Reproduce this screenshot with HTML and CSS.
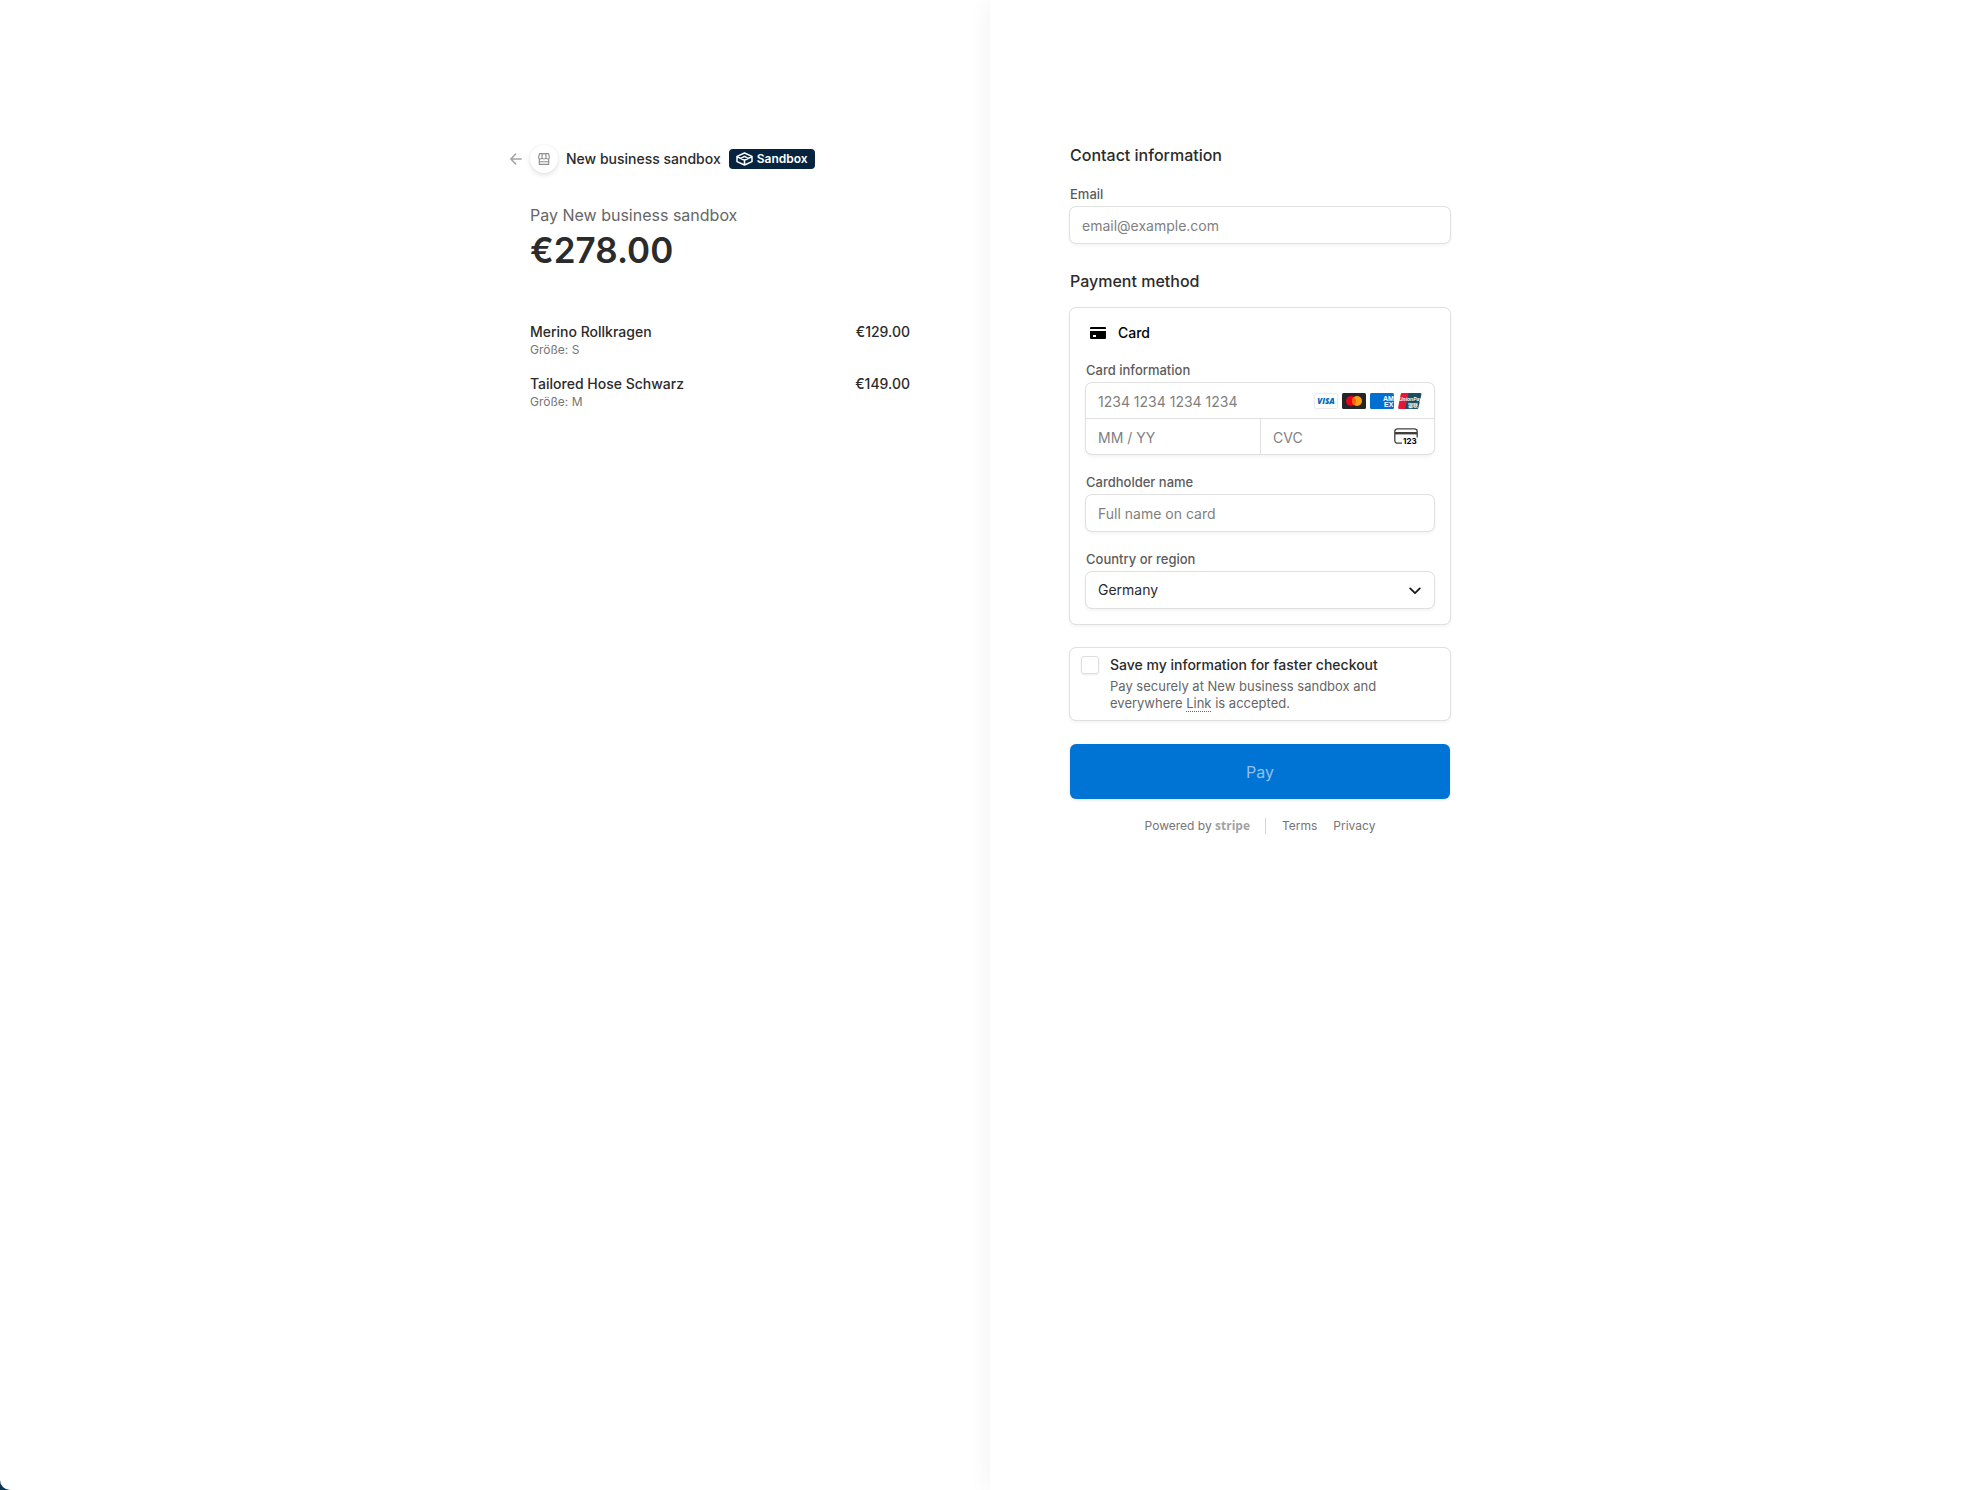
FILE: index.html
```html
<!DOCTYPE html>
<html lang="en">
<head>
  <meta charset="UTF-8">
  <meta name="viewport" content="width=device-width, initial-scale=1">
  <title>New business sandbox</title>
  <link rel="stylesheet" href="styles.css">
</head>
<body>

<div class="checkout">

  <section class="summary">
    <div class="summary-inner">
      <header class="business">
        <a class="back" href="#" aria-label="Back">
          <svg width="12" height="12" viewBox="0 0 12 12" fill="none" stroke="#a3a3a3" stroke-width="1.6" stroke-linecap="round" stroke-linejoin="round"><path d="M11.2 6H1M5.6 1 .9 6l4.700 5"/></svg>
        </a>
        <span class="avatar">
          <svg width="12" height="12" viewBox="0 0 12 12" fill="none" stroke="#8c8c8c" stroke-width="1.100" stroke-linejoin="round"><path d="M1.500.6h9l.9 3.600c0 1.100-.7 1.800-1.600 1.800S8 5.300 8 4.400C8 5.300 7.100 6 6 6s-2-.7-2-1.600C4 5.300 3.200 6 2.200 6S.6 5.300.6 4.200zM4.200.6 4 4.400M7.800.6 8 4.400M1.300 6v5.400h9.400V6M1.300 8.800h9.400"/></svg>
        </span>
        <span class="business-name">New business sandbox</span>
        <span class="badge">
          <svg width="17" height="14" viewBox="0 0 17 14" fill="none" stroke="#fff" stroke-width="1.500" stroke-linejoin="round"><path d="M8.500 1 16 4.400v5.200L8.500 13 1 9.600V4.400zM1 4.600l7.500 3.600L16 4.600M8.500 8.200V13M4.800 6.300l3.700-1.900 3.700 1.900"/></svg>
          Sandbox
        </span>
      </header>

      <p class="pay-to">Pay New business sandbox</p>
      <p class="total">€278.00</p>

      <ul class="items">
        <li class="item">
          <div>
            <div class="item-name">Merino Rollkragen</div>
            <div class="item-size">Größe: S</div>
          </div>
          <div class="item-name">€129.00</div>
        </li>
        <li class="item">
          <div>
            <div class="item-name">Tailored Hose Schwarz</div>
            <div class="item-size">Größe: M</div>
          </div>
          <div class="item-name">€149.00</div>
        </li>
      </ul>
    </div>
  </section>

  <main class="payment">
    <form class="payment-inner">
      <h2>Contact information</h2>
      <div class="field">
        <label for="email">Email</label>
        <input class="box" type="email" id="email" placeholder="email@example.com">
      </div>

      <h2 class="method-title">Payment method</h2>
      <div class="panel card">
        <div class="card-head">
          <svg width="16" height="12" viewBox="0 0 16 12"><path d="M1 0h14a1 1 0 0 1 1 1v1H0V1a1 1 0 0 1 1-1zM0 4h16v7a1 1 0 0 1-1 1H1a1 1 0 0 1-1-1zm3 4v2h3V8z" fill="#000" fill-rule="evenodd"/></svg>
          <span>Card</span>
        </div>

        <div class="field">
          <label for="number">Card information</label>
          <div class="box card-group">
            <div class="cell number-cell">
              <input type="text" id="number" placeholder="1234 1234 1234 1234">
              <span class="brands">
                <svg width="24" height="16" viewBox="0 0 24 16"><rect x=".5" y=".5" width="23" height="15" rx="1.500" fill="#fff" stroke="#ebebeb"/><text class="visa" x="12" y="11" text-anchor="middle">VISA</text></svg>
                <svg width="24" height="16" viewBox="0 0 24 16"><rect width="24" height="16" rx="1.500" fill="#252525"/><circle cx="9" cy="8" r="5" fill="#eb001b"/><circle cx="15" cy="8" r="5" fill="#f79e1b"/><path d="M12 4a5 5 0 0 1 0 8 5 5 0 0 1 0-8z" fill="#ff5f00"/></svg>
                <svg width="24" height="16" viewBox="0 0 24 16"><rect width="24" height="16" rx="1.500" fill="#016fd0"/><text class="amex" x="13" y="8">AM</text><text class="amex" x="14" y="14">EX</text></svg>
                <svg width="24" height="16" viewBox="0 0 24 16"><path d="M4 0h8L8.500 16H1.500A1.500 1.500 0 0 1 .2 14.200L2.700 1.200A1.500 1.500 0 0 1 4 0z" fill="#e21836"/><path d="M10.500 0h11.800a1.200 1.200 0 0 1 1.100 1.500l-3 13.200a1.700 1.700 0 0 1-1.600 1.300H7z" fill="#1c4c60"/><text class="union" x="1" y="7.500">UnionPay</text><text class="union-cn" x="10" y="13.500">银联</text></svg>
              </span>
            </div>
            <div class="cell">
              <input type="text" aria-label="Expiration" placeholder="MM / YY">
            </div>
            <div class="cell cvc-cell">
              <input type="text" aria-label="CVC" placeholder="CVC">
              <svg width="24" height="17" viewBox="0 0 24 17"><path d="M8 15.200H3.500A2.600 2.600 0 0 1 .8 12.600V3.400A2.600 2.600 0 0 1 3.400.8h17.200a2.600 2.600 0 0 1 2.600 2.600v6" fill="none" stroke="#404040" stroke-width="1.300"/><path d="M1 4h22v2.400H1z" fill="#404040"/><text class="cvc-digits" x="9" y="16.200">123</text></svg>
            </div>
          </div>
        </div>

        <div class="field">
          <label for="name">Cardholder name</label>
          <input class="box" type="text" id="name" placeholder="Full name on card">
        </div>

        <div class="field">
          <label for="country">Country or region</label>
          <div class="select-wrap">
            <select class="box" id="country">
              <option>Germany</option>
            </select>
            <svg class="chevron" width="12" height="8" viewBox="0 0 12 8" fill="none" stroke="#1a1a1a" stroke-width="1.800" stroke-linecap="round" stroke-linejoin="round"><path d="M1.200 1.400 6 6.200l4.800-4.800"/></svg>
          </div>
        </div>
      </div>

      <div class="panel save">
        <input type="checkbox" id="save">
        <div>
          <label for="save">Save my information for faster checkout</label>
          <p>Pay securely at New business sandbox and everywhere <a href="#">Link</a> is accepted.</p>
        </div>
      </div>

      <button class="pay" type="button">Pay</button>

      <footer>
        <span>Powered by <a class="stripe" href="#">stripe</a></span>
        <nav>
          <a href="#">Terms</a>
          <a href="#">Privacy</a>
        </nav>
      </footer>
    </form>
  </main>

</div>

</body>
</html>
```

FILE: styles.css
```css
* {
  box-sizing: border-box;
}
html {
  background: #0b3550;
}
body {
  margin: 0;
  font-family: Inter, "Liberation Sans", sans-serif;
  font-size: 14px;
  line-height: 18px;
  color: #2b2b2b;
}
h2, p, ul {
  margin: 0;
  padding: 0;
}
a {
  color: inherit;
  text-decoration: none;
}
svg {
  display: block;
  flex: none;
}
.checkout {
  display: grid;
  grid-template-columns: round(up, 50%, 2px) 1fr;
  min-height: 100vh;
  background: #fff;
  border-bottom-left-radius: 10px;
  overflow: hidden;
}
.summary, .payment {
  padding: 145px 80px 40px;
}
.summary-inner, .payment-inner {
  max-width: 380px;
}
.summary-inner {
  margin-left: auto;
}
.payment {
  box-shadow: 0 0 24px rgba(0, 0, 0, 0.06);
}

/* summary */
.business {
  display: flex;
  align-items: center;
  height: 28px;
  margin-left: -20px;
  font-weight: 450;
}
.avatar {
  display: flex;
  align-items: center;
  justify-content: center;
  width: 28px;
  height: 28px;
  margin: 0 8px;
  border-radius: 50%;
  box-shadow: 0 2px 5px rgba(0, 0, 0, 0.12), 0 0 2px rgba(0, 0, 0, 0.06);
}
.badge {
  display: flex;
  align-items: center;
  gap: 4px;
  height: 20px;
  margin-left: 8px;
  padding: 0 7px;
  border-radius: 4px;
  background: #06243f;
  color: #fff;
  font-size: 12px;
  font-weight: 600;
}
.pay-to {
  margin-top: 32px;
  font-size: 16px;
  line-height: 20px;
  font-weight: 400;
  color: #666;
}
.total {
  font-size: 35px;
  line-height: 50px;
  font-weight: 600;
}
.items {
  display: flex;
  flex-direction: column;
  gap: 16px;
  margin-top: 48px;
  list-style: none;
}
.item {
  display: flex;
  justify-content: space-between;
}
.item-name {
  font-weight: 450;
}
.item-size {
  font-size: 12px;
  color: #757575;
}

/* payment */
h2 {
  margin-bottom: 20px;
  font-size: 16px;
  line-height: 20px;
  font-weight: 450;
}
.method-title {
  margin: 28px 0 17px;
}
.field label {
  display: block;
  margin-bottom: 4px;
  font-size: 13px;
  font-weight: 500;
  color: #5c5c5c;
}
input, select, button {
  font: inherit;
  color: inherit;
}
input::placeholder {
  color: #7f7f7f;
  opacity: 1;
}
.box, .panel {
  display: block;
  width: 100%;
  border: 0;
  border-radius: 6px;
  background: #fff;
  box-shadow: 0 0 0 1px #e0e0e0, 0 2px 4px rgba(0, 0, 0, 0.07);
}
input.box, select.box {
  height: 36px;
  padding: 0 12px;
}
.card {
  padding: 16px;
}
.card .field + .field {
  margin-top: 19px;
}
.card-head {
  display: flex;
  align-items: center;
  gap: 12px;
  margin: 0 4px 19px;
  font-weight: 450;
  color: #000;
}
.card-group {
  display: grid;
  grid-template-columns: minmax(0, 1fr) minmax(0, 1fr);
}
.cell {
  display: flex;
  align-items: center;
  height: 35px;
  padding: 0 12px;
}
.cell input {
  flex: 1;
  min-width: 0;
  padding: 2px 0 0;
  border: 0;
  background: none;
}
.number-cell {
  grid-column: 1 / 3;
  height: 36px;
  border-bottom: 1px solid #e0e0e0;
}
.cvc-cell {
  padding-right: 16px;
  border-left: 1px solid #e0e0e0;
}
.brands {
  display: flex;
  gap: 4px;
}
.visa {
  font: italic 800 8px "Open Sans", sans-serif;
  fill: #0066b2;
}
.amex {
  font: 800 7px "Liberation Sans", sans-serif;
  fill: #fff;
}
.union {
  font: italic bold 5px "Liberation Sans", sans-serif;
  fill: #fff;
}
.union-cn {
  font: bold 5px "Noto Sans CJK SC", sans-serif;
  fill: #fff;
}
.cvc-digits {
  font: bold 8px Inter, sans-serif;
  fill: #000;
}
.select-wrap {
  position: relative;
}
.select-wrap select {
  appearance: none;
}
.chevron {
  position: absolute;
  top: 15px;
  right: 13px;
  pointer-events: none;
}
.save {
  display: flex;
  gap: 11px;
  margin-top: 24px;
  padding: 8px 11px;
}
.save input {
  appearance: none;
  flex: none;
  width: 18px;
  height: 18px;
  margin: 0;
  border: 1px solid #dedede;
  border-radius: 3px;
  box-shadow: 0 1px 2px rgba(0, 0, 0, 0.08);
}
.save label {
  display: block;
  font-weight: 450;
}
.save p {
  max-width: 300px;
  margin-top: 4px;
  font-size: 13px;
  line-height: 17px;
  color: #666;
}
.save a {
  text-decoration: underline dotted 1px;
  text-underline-offset: 3px;
}
.pay {
  display: block;
  width: 100%;
  height: 55px;
  margin-top: 24px;
  border: 0;
  border-radius: 6px;
  background: #0074d4;
  box-shadow: 0 1px 3px rgba(0, 0, 0, 0.12);
  color: #8fc1ed;
  font-size: 16px;
  font-weight: 400;
}
footer {
  display: flex;
  justify-content: center;
  margin-top: 19px;
  font-size: 12px;
  line-height: 16px;
  color: #757575;
}
.stripe {
  font-family: "Open Sans", sans-serif;
  font-weight: 700;
  color: #a3a3a3;
}
footer nav {
  display: flex;
  gap: 16px;
  margin-left: 15px;
  padding-left: 16px;
  border-left: 1px solid #d4d4d4;
}
```
